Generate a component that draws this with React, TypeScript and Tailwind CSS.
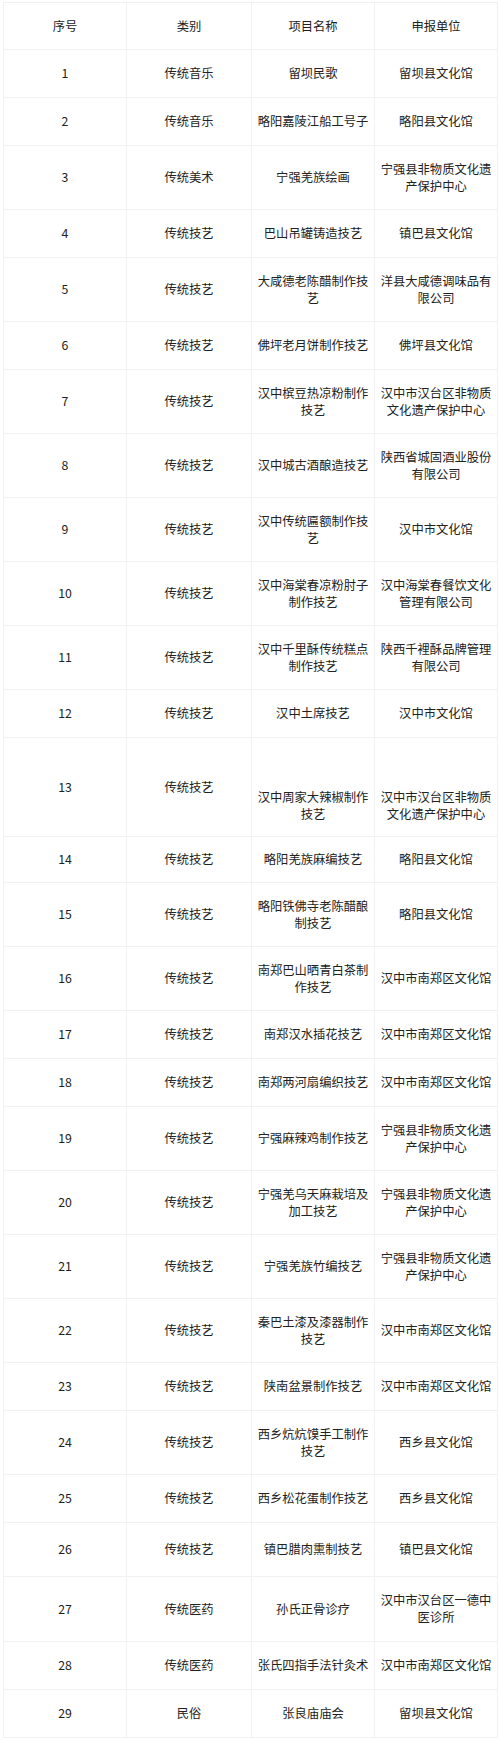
import React from "react";

type Row = { no: string; cat: string; name: string; unit: string; h: string; low?: boolean };

const rows: Row[] = [
  { no: "1", cat: "传统音乐", name: "留坝民歌", unit: "留坝县文化馆", h: "h-[48px]" },
  { no: "2", cat: "传统音乐", name: "略阳嘉陵江船工号子", unit: "略阳县文化馆", h: "h-[48px]" },
  { no: "3", cat: "传统美术", name: "宁强羌族绘画", unit: "宁强县非物质文化遗产保护中心", h: "h-[64px]" },
  { no: "4", cat: "传统技艺", name: "巴山吊罐铸造技艺", unit: "镇巴县文化馆", h: "h-[48px]" },
  { no: "5", cat: "传统技艺", name: "大咸德老陈醋制作技艺", unit: "洋县大咸德调味品有限公司", h: "h-[64px]" },
  { no: "6", cat: "传统技艺", name: "佛坪老月饼制作技艺", unit: "佛坪县文化馆", h: "h-[48px]" },
  { no: "7", cat: "传统技艺", name: "汉中槟豆热凉粉制作技艺", unit: "汉中市汉台区非物质文化遗产保护中心", h: "h-[64px]" },
  { no: "8", cat: "传统技艺", name: "汉中城古酒酿造技艺", unit: "陕西省城固酒业股份有限公司", h: "h-[64px]" },
  { no: "9", cat: "传统技艺", name: "汉中传统匾额制作技艺", unit: "汉中市文化馆", h: "h-[64px]" },
  { no: "10", cat: "传统技艺", name: "汉中海棠春凉粉肘子制作技艺", unit: "汉中海棠春餐饮文化管理有限公司", h: "h-[64px]" },
  { no: "11", cat: "传统技艺", name: "汉中千里酥传统糕点制作技艺", unit: "陕西千裡酥品牌管理有限公司", h: "h-[64px]" },
  { no: "12", cat: "传统技艺", name: "汉中土席技艺", unit: "汉中市文化馆", h: "h-[48px]" },
  { no: "13", cat: "传统技艺", name: "汉中周家大辣椒制作技艺", unit: "汉中市汉台区非物质文化遗产保护中心", h: "h-[99px]", low: true },
  { no: "14", cat: "传统技艺", name: "略阳羌族麻编技艺", unit: "略阳县文化馆", h: "h-[46px]" },
  { no: "15", cat: "传统技艺", name: "略阳铁佛寺老陈醋酿制技艺", unit: "略阳县文化馆", h: "h-[64px]" },
  { no: "16", cat: "传统技艺", name: "南郑巴山晒青白茶制作技艺", unit: "汉中市南郑区文化馆", h: "h-[64px]" },
  { no: "17", cat: "传统技艺", name: "南郑汉水插花技艺", unit: "汉中市南郑区文化馆", h: "h-[48px]" },
  { no: "18", cat: "传统技艺", name: "南郑两河扇编织技艺", unit: "汉中市南郑区文化馆", h: "h-[48px]" },
  { no: "19", cat: "传统技艺", name: "宁强麻辣鸡制作技艺", unit: "宁强县非物质文化遗产保护中心", h: "h-[64px]" },
  { no: "20", cat: "传统技艺", name: "宁强羌乌天麻栽培及加工技艺", unit: "宁强县非物质文化遗产保护中心", h: "h-[64px]" },
  { no: "21", cat: "传统技艺", name: "宁强羌族竹编技艺", unit: "宁强县非物质文化遗产保护中心", h: "h-[64px]" },
  { no: "22", cat: "传统技艺", name: "秦巴土漆及漆器制作技艺", unit: "汉中市南郑区文化馆", h: "h-[64px]" },
  { no: "23", cat: "传统技艺", name: "陕南盆景制作技艺", unit: "汉中市南郑区文化馆", h: "h-[48px]" },
  { no: "24", cat: "传统技艺", name: "西乡炕炕馍手工制作技艺", unit: "西乡县文化馆", h: "h-[64px]" },
  { no: "25", cat: "传统技艺", name: "西乡松花蛋制作技艺", unit: "西乡县文化馆", h: "h-[48px]" },
  { no: "26", cat: "传统技艺", name: "镇巴腊肉熏制技艺", unit: "镇巴县文化馆", h: "h-[54px]" },
  { no: "27", cat: "传统医药", name: "孙氏正骨诊疗", unit: "汉中市汉台区一德中医诊所", h: "h-[65px]" },
  { no: "28", cat: "传统医药", name: "张氏四指手法针灸术", unit: "汉中市南郑区文化馆", h: "h-[48px]" },
  { no: "29", cat: "民俗", name: "张良庙庙会", unit: "留坝县文化馆", h: "h-[48px]" },
];

const td = "border border-[#f1f1f1] px-[2px] py-0 text-center align-middle";

export default function App() {
  return (
    <div
      className="w-[500px] h-[1740px] bg-white pt-[2px] text-[#222222] text-[12.3px] leading-[16.6px]"
      style={{ fontFamily: '"Noto Sans CJK SC", "Noto Sans", sans-serif' }}
    >
      <table className="ml-[3px] w-[494px] table-fixed border-collapse">
        <colgroup>
          <col className="w-[123px]" />
          <col className="w-[125px]" />
          <col className="w-[123px]" />
          <col className="w-[123px]" />
        </colgroup>
        <thead>
          <tr className="h-[47px]">
            <th className={`${td} font-normal`}>序号</th>
            <th className={`${td} font-normal`}>类别</th>
            <th className={`${td} font-normal`}>项目名称</th>
            <th className={`${td} font-normal`}>申报单位</th>
          </tr>
        </thead>
        <tbody>
          {rows.map((r) => (
            <tr key={r.no} className={r.h}>
              <td className={td}>{r.no}</td>
              <td className={td}>{r.cat}</td>
              <td className={r.low ? `${td} pt-[38px]` : td}>{r.name}</td>
              <td className={r.low ? `${td} pt-[38px]` : td}>{r.unit}</td>
            </tr>
          ))}
        </tbody>
      </table>
    </div>
  );
}
